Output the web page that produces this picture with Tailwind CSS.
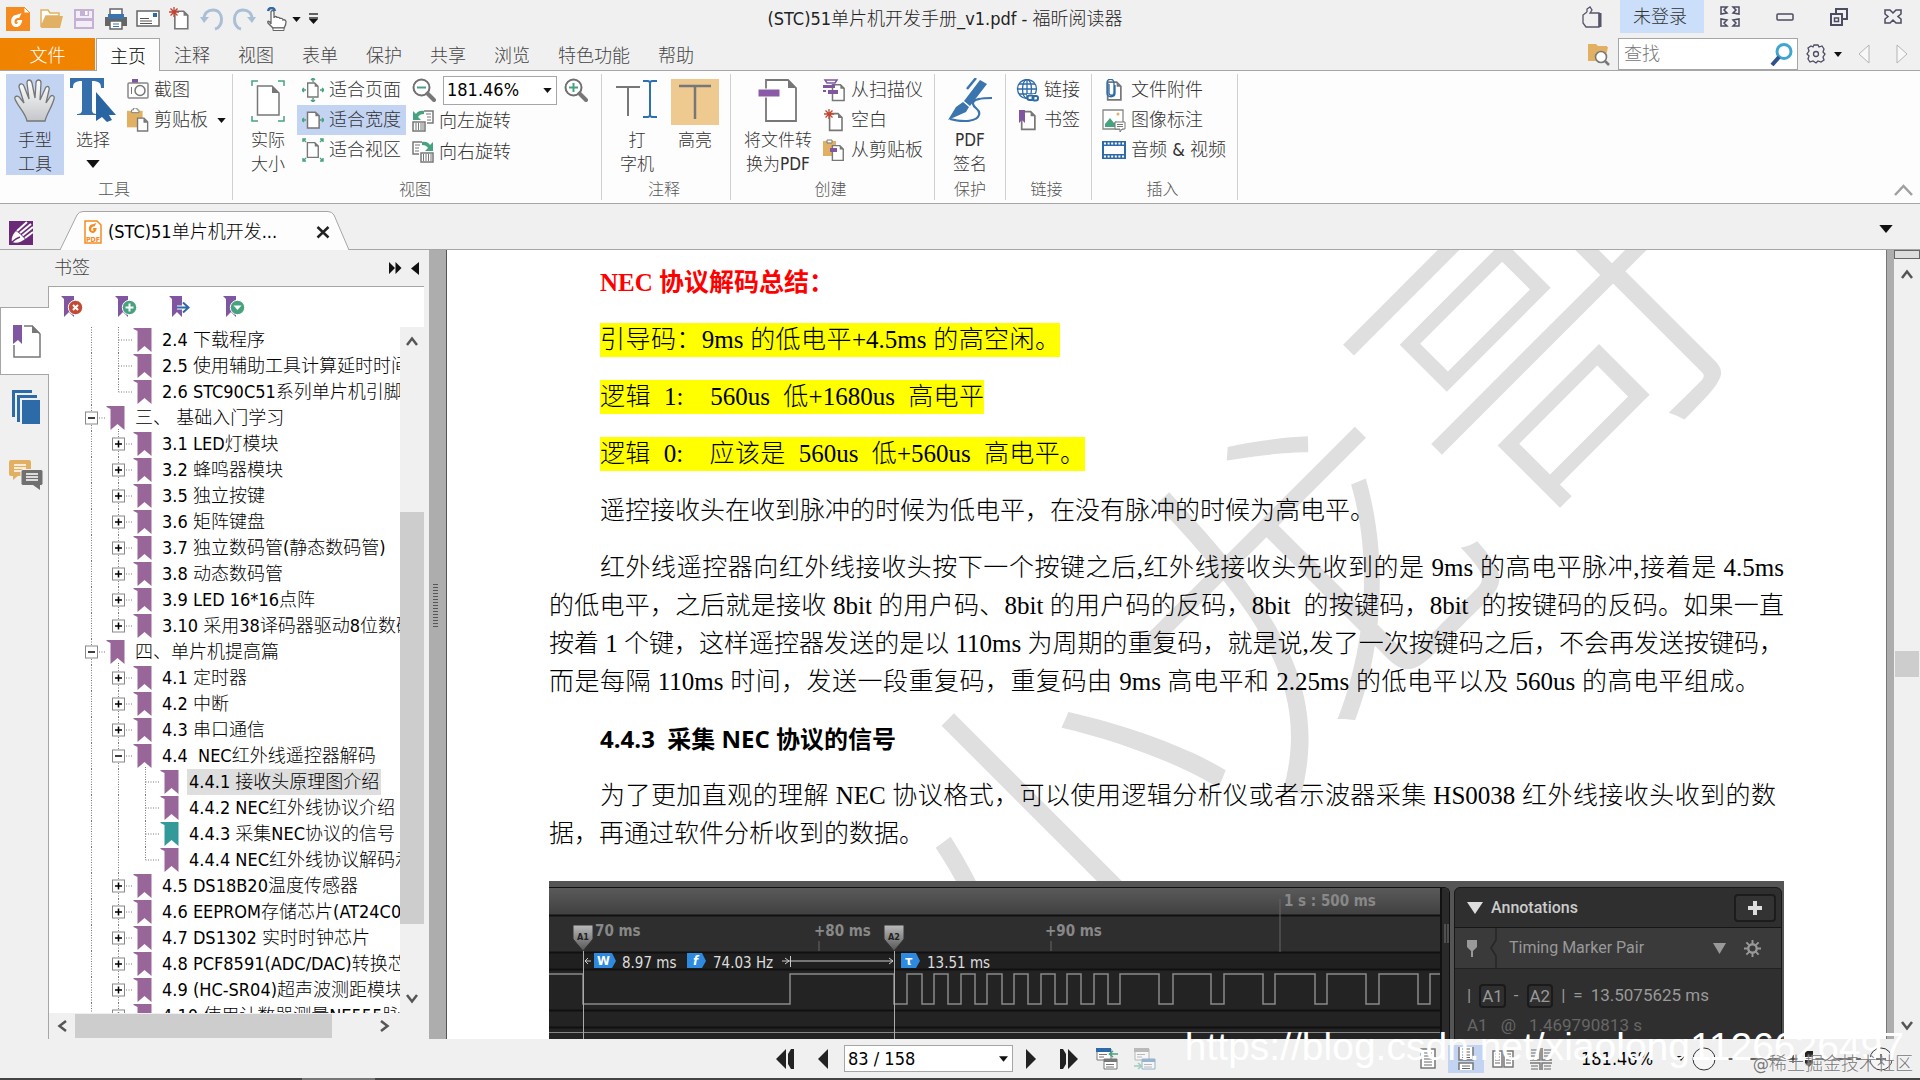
<!DOCTYPE html>
<html lang="zh-CN">
<head>
<meta charset="utf-8">
<title>(STC)51单片机开发手册_v1.pdf - 福昕阅读器</title>
<script src="https://cdn.jsdelivr.net/npm/@tailwindcss/browser@4"></script>
</head>
<body class="relative flex h-screen flex-col overflow-hidden bg-[#f0f0f0] font-['DejaVu_Sans_Condensed','Noto_Sans_CJK_SC',sans-serif] text-[18px] font-light leading-6 text-[#222]">

<svg class="hidden" aria-hidden="true">
  <symbol id="page" viewBox="0 0 20 24"><path d="M2 1.5h10.500l5 5v16H2z" fill="#fff" stroke="#777" stroke-width="2"/><path d="M12.500 1v6H18z" fill="#777"/></symbol>
  <symbol id="down" viewBox="0 0 10 6"><path d="M0 0h10L5 6z" fill="#111"/></symbol>
  <symbol id="ribbon" viewBox="0 0 22 22"><path d="M0 0h13v21l-5-5-5 5V3z" fill="#8056a0"/></symbol>
  <symbol id="clip" viewBox="0 0 24 26"><path d="M0 3h17v18H0z" fill="#e2b062"/><path d="M5 5V2h2V0h4v2h2v3z" fill="#fff" stroke="#777"/><path d="M11.500 11h7l4 4v10h-11z" fill="#fff" stroke="#777" stroke-width="1.500"/><path d="M18 11v5h5z" fill="#777"/></symbol>
  <symbol id="star" viewBox="0 0 10 10"><path d="M5 0v10M0 5h10M1.500 1.500l7 7M8.500 1.500l-7 7" stroke="#c2452f" stroke-width="1.300"/></symbol>
  <symbol id="mag" viewBox="0 0 24 24"><circle cx="9.500" cy="9.500" r="8" fill="#fff" stroke="#6f6f6f" stroke-width="2"/><path d="M15.500 15.500l6.500 6.500" stroke="#777" stroke-width="4" stroke-linecap="round"/></symbol>
  <symbol id="g" viewBox="0 0 12 12"><path d="M10 0L6 1.500C3 1.500 1 4 1 7s2 5 4.500 5S10 10 10.500 6H6.500l-1 2H7c-.500 1-1 1.500-1.700 1.500C4 9.500 3.600 8 4 6.500S6 4 8 4z"/></symbol>
</svg>

<header>
  <div class="flex h-[38px] items-start">
    <div class="flex w-[330px] shrink-0 items-center gap-2 pt-[7px] pl-[6px]">
      <svg class="mr-0.5 size-6" viewBox="0 0 24 24"><path d="M0 0h18l6 6v18H0z" fill="#f58a1f"/><path d="M18 0v6h6z" fill="#fff" stroke="#f58a1f"/><use href="#g" x="4" y="6" width="14" height="14" fill="#fff"/></svg>
      <button aria-label="打开"><svg class="size-6" viewBox="0 0 24 24"><path d="M1 3h7l2 3h9v3H6L1 20z" fill="#fff" stroke="#e2b062" stroke-width="1.500"/><path d="M6 9h17l-3 12H1z" fill="#e2b062"/></svg></button>
      <button aria-label="保存"><svg class="size-6" viewBox="0 0 24 24"><path d="M3 3h18v18H3z" fill="#f3edf6" stroke="#c5b1d3" stroke-width="2"/><path d="M3 11h18v3H3zM8 3h9v6H8z" fill="#c5b1d3"/><path d="M13 4h2.500v4H13z" fill="#fff"/></svg></button>
      <button aria-label="打印"><svg class="size-6" viewBox="0 0 24 24"><path d="M1 10h22v9H1z" fill="#666"/><path d="M6 2h12v7H6z" fill="#fff" stroke="#666" stroke-width="1.500"/><path d="M4 7h16v5H4z" fill="#3a75ad"/><path d="M6 14h12v8H6z" fill="#fff" stroke="#666" stroke-width="1.500"/><path d="M9 17h6M9 19.500h6" stroke="#3a75ad"/></svg></button>
      <button aria-label="邮件"><svg class="size-6" viewBox="0 0 24 24"><path d="M1 4h22v15H1z" fill="#fff" stroke="#666" stroke-width="1.500"/><path d="M17 6h4v4h-4z" fill="#2d6aa8"/><path d="M4 11.500h9M4 14h12M4 16.500h12" stroke="#555"/></svg></button>
      <button aria-label="新建"><svg class="size-6" viewBox="0 0 24 24"><use href="#page" x="5" y="3" width="17" height="20"/><use href="#star" x="1" y="0" width="10" height="10"/></svg></button>
      <button aria-label="撤销"><svg class="size-6" viewBox="0 0 24 24"><path d="M4 12c0-6 4-9 9-9 11 0 11 17 2 19" fill="none" stroke="#a9bfd6" stroke-width="3"/><path d="M0 10h9l-5 6z" fill="#a9bfd6"/></svg></button>
      <button aria-label="重做"><svg class="size-6" viewBox="0 0 24 24"><path d="M20 12c0-6-4-9-9-9C0 3 0 20 9 22" fill="none" stroke="#a9bfd6" stroke-width="3"/><path d="M24 10h-9l5 6z" fill="#a9bfd6"/></svg></button>
      <button aria-label="触摸模式" class="flex items-center gap-1"><svg class="size-6" viewBox="0 0 24 24"><path d="M4 4c1-4 6-4 7 0" fill="none" stroke="#2d6aa8" stroke-width="2.500"/><path d="M7 17V5c0-2 3-2 3 0v6c0-2 3-2 3 0 0-1 3-1 3 1 0-1 3-1 3 1 2-1 3 1 3 2 0 3-1 4-2 6H9l-5-5c-1-2 1-3 3 1z" fill="#fff" stroke="#666" stroke-width="1.300"/><path d="M9 21h11v2.500H9z" fill="#fff" stroke="#666"/></svg><svg class="h-[5px] w-[9px]"><use href="#down"/></svg></button>
      <button aria-label="自定义"><svg class="h-3 w-[9px]" viewBox="0 0 9 12"><path d="M0 1h9M0 5h9" stroke="#333" stroke-width="1.500"/><path d="M0 6h9l-4.500 5z" fill="#111"/></svg></button>
    </div>
    <h1 class="min-w-0 flex-1 pt-[7px] text-center">(STC)51单片机开发手册_v1.pdf - 福昕阅读器</h1>
    <div class="flex w-[360px] shrink-0 items-center text-[#4b4b62]">
      <button aria-label="换肤" class="ml-[22px] mr-4"><svg class="size-[22px]" viewBox="0 0 22 22" fill="none" stroke="#55556a" stroke-width="1.300"><path d="M5 6L5 3l3-2 2 3-2 3h9v14H4l-3-4V9l4-3"/><path d="M18 7v14" stroke-width="3"/></svg></button>
      <button class="h-[33px] w-[84px] bg-[#cbdffa] pr-1 text-[#333]">未登录</button>
      <div class="flex flex-1 items-center justify-between pl-4 pr-[18px]">
        <button aria-label="界面"><svg class="h-[21px] w-5" viewBox="0 0 20 21" fill="none" stroke="#4b4b62" stroke-width="1.500"><path d="M1 8V1h6L4 4l3 3zM19 8V1h-6l3 3-3 3zM1 13v7h6l-3-3 3-3zM19 13v7h-6l3-3-3-3z"/></svg></button>
        <button aria-label="最小化"><svg class="h-2 w-[18px]" viewBox="0 0 18 8"><rect x="1" y="1" width="16" height="6" rx="1" fill="none" stroke="#4b4b62" stroke-width="1.500"/></svg></button>
        <button aria-label="还原"><svg class="size-[18px]" viewBox="0 0 18 18" fill="none" stroke="#4b4b62" stroke-width="2"><path d="M6 5V1h11v10h-4M1 6h11v11H1z"/><path d="M4.500 10h4v3.500h-4z" stroke-width="1.500"/></svg></button>
        <button aria-label="关闭"><svg class="h-[15px] w-[18px]" viewBox="0 0 18 15"><path d="M1 1h5l3 3 3-3h5v4l-3 2.500L17 10v4h-5l-3-3-3 3H1v-4l3-2.500L1 5z" fill="none" stroke="#4b4b62" stroke-width="1.500"/></svg></button>
      </div>
    </div>
  </div>

  <div class="flex h-[33px] items-stretch border-b border-[#a6a6a6] text-[#444]">
    <nav class="flex items-stretch">
      <button class="w-[95px] bg-[#f08300] pt-1 text-white">文件</button>
      <button class="relative -mb-px ml-px border border-b-0 border-[#a6a6a6] bg-[#fdfdfd] px-[13px] pt-[3px] text-black">主页</button>
      <button class="px-[14px] pt-1">注释</button>
      <button class="px-[14px] pt-1">视图</button>
      <button class="px-[14px] pt-1">表单</button>
      <button class="px-[14px] pt-1">保护</button>
      <button class="px-[14px] pt-1">共享</button>
      <button class="px-[14px] pt-1">浏览</button>
      <button class="px-[14px] pt-1">特色功能</button>
      <button class="px-[14px] pt-1">帮助</button>
    </nav>
    <div class="flex flex-1 items-center justify-end pr-3">
      <button aria-label="高级查找" class="mr-2"><svg class="size-[23px]" viewBox="0 0 23 23"><path d="M1 1h8l2 2h9v3H1z" fill="#e2b062"/><path d="M1 4h20l-3 14H1z" fill="#e2b062"/><circle cx="14" cy="14" r="5.500" fill="#fff" stroke="#777" stroke-width="1.600"/><path d="M18 18l4 4" stroke="#777" stroke-width="2.500"/></svg></button>
      <div class="flex h-8 w-[180px] items-center border border-[#a6a6a6] bg-white pr-1">
        <input aria-label="查找" placeholder="查找" class="w-full min-w-0 px-[5px] outline-none placeholder:text-[#777]">
        <svg class="size-[23px] shrink-0" viewBox="0 0 23 23"><circle cx="14" cy="8.500" r="7" fill="none" stroke="#3fa6d0" stroke-width="3"/><path d="M9 14l-7 8" stroke="#32518f" stroke-width="4"/></svg>
      </div>
      <button aria-label="设置" class="ml-2 flex items-center gap-2"><svg class="size-5" viewBox="0 0 20 20" fill="none" stroke="#4b4b62" stroke-width="1.300"><path d="M8 1h4l1 2 3-1 2 3-1 3 2 2-2 3 1 3-3 2-3-1-2 2-3-2-3 1-2-3 1-3-2-2 2-3-1-3 3-2 2 1z"/><circle cx="10" cy="10" r="2.500"/></svg><svg class="h-[5px] w-2"><use href="#down"/></svg></button>
      <button aria-label="上一个" class="ml-4"><svg class="h-5 w-3" viewBox="0 0 12 20"><path d="M11 1v18L1 10z" fill="#f8f8f8" stroke="#b4b4b4"/></svg></button>
      <button aria-label="下一个" class="ml-[26px]"><svg class="h-5 w-3" viewBox="0 0 12 20"><path d="M1 1v18l10-9z" fill="#f8f8f8" stroke="#b4b4b4"/></svg></button>
    </div>
  </div>

  <div class="flex h-[133px] border-b border-[#a6a6a6] bg-[#fdfdfd] py-[3px] text-[#333]">
    <section class="flex w-[233px] flex-col border-r border-[#d0d0d0]">
      <div class="flex flex-1">
        <button class="ml-[6px] flex h-[101px] w-[58px] flex-col items-center bg-[#c3d4f3] pt-[5px] text-[17px]">
          <svg class="mb-1.5 h-[43px] w-[42px] shrink-0" viewBox="0 0 42 43"><defs><linearGradient id="h" x2="0" y2="1"><stop stop-color="#fff"/><stop offset="1" stop-color="#c4c6c9"/></linearGradient></defs><path d="M13 42C11 33 4 28 1 20c-1-3 3-4 5-1l4 5L5 8c0-4 4-4 5-1l5 13L13 4c0-4 4-4 5 0l3 15 1-15c0-4 5-4 5 0l-1 17 5-11c1-4 5-3 4 1l-3 13 4-6c2-3 5-1 4 2-2 8-7 14-9 22z" fill="url(#h)" stroke="#777" stroke-width="1.300"/></svg>
          <span>手型</span><span>工具</span>
        </button>
        <button class="ml-[6px] flex w-[46px] flex-col items-center pt-1 text-[17px]">
          <svg class="mb-1.5 h-[44px] w-[46px] shrink-0" viewBox="0 0 46 44"><path d="M0 0h34v10h-3c0-5-2-7-9-7v29c0 3 2 4 5 4v1H7v-1c3 0 5-1 5-4V3C5 3 3 5 3 10H0z" fill="#3670ac"/><path d="M26 14v29l6-4 5 5 5-2-3-5h7z" fill="#2a65a3"/></svg>
          <span>选择</span><svg class="mt-2 h-2 w-[14px] shrink-0"><use href="#down"/></svg>
        </button>
        <div class="ml-[11px] flex flex-col items-start gap-[6px] pt-1">
          <button class="flex items-center gap-[5px] text-[18px]"><svg class="h-[22px] w-[22px]" viewBox="0 0 22 22"><path d="M5 0h6v4H5z" fill="#8056a0"/><rect x="1" y="4" width="20" height="15" rx="1" fill="#fff" stroke="#888" stroke-width="1.500"/><circle cx="13" cy="11.500" r="5" fill="none" stroke="#777" stroke-width="1.500"/><path d="M4.500 8v7" stroke="#777"/></svg>截图</button>
          <button class="flex items-center gap-[5px] text-[18px]"><svg class="h-[24px] w-[22px]"><use href="#clip"/></svg>剪贴板<svg class="ml-1 h-[5px] w-[9px]"><use href="#down"/></svg></button>
        </div>
      </div>
      <h2 class="pr-1 text-center text-base leading-5 text-[#555]">工具</h2>
    </section>

    <section class="flex w-[369px] flex-col border-r border-[#d0d0d0]">
      <div class="flex flex-1">
        <button class="ml-[17px] flex w-9 flex-col items-center pt-[6px] text-[17px]">
          <svg class="mb-[6px] h-[42px] w-[34px] shrink-0" viewBox="0 0 34 42"><path d="M1 6V1h6M27 1h6v5M1 36v5h6M27 41h6v-5" fill="none" stroke="#47a37f" stroke-width="1.500"/><path d="M6.500 6H21l7 7v22H6.500z" fill="#fff" stroke="#777" stroke-width="1.500"/><path d="M21 6v7h7z" fill="#777"/></svg>
          <span>实际</span><span>大小</span>
        </button>
        <div class="ml-[11px] flex flex-col pt-px">
          <button class="flex h-[30px] items-center gap-[5px] px-[5px]"><svg class="h-6 w-[22px]" viewBox="0 0 22 24"><use href="#page" x="4" y="4" width="14" height="16"/><path d="M11 0v4M9 2l2-2 2 2M11 20v4M9 22l2 2 2-2M0 12h4M2 10l-2 2 2 2M22 12h-4M20 10l2 2-2 2" fill="none" stroke="#47a37f" stroke-width="1.400"/></svg>适合页面</button>
          <button class="flex h-[30px] items-center gap-[5px] bg-[#c3d4f3] px-[5px]"><svg class="h-6 w-[22px]" viewBox="0 0 22 24"><use href="#page" x="4" y="3" width="15" height="18"/><path d="M0 12h4M2 10l-2 2 2 2M22 12h-4M20 10l2 2-2 2" fill="none" stroke="#47a37f" stroke-width="1.400"/></svg>适合宽度</button>
          <button class="flex h-[30px] items-center gap-[5px] px-[5px]"><svg class="h-6 w-[22px]" viewBox="0 0 22 24"><use href="#page" x="4" y="3" width="14" height="18"/><path d="M1 4V1h3M1 1l3 3M18 1h3v3M21 1l-3 3M1 20v3h3M1 23l3-3M18 23h3v-3M21 23l-3-3" fill="none" stroke="#47a37f" stroke-width="1.400"/></svg>适合视区</button>
        </div>
        <div class="ml-[6px] flex flex-col pt-px">
          <div class="flex h-[30px] items-center gap-[7px]">
            <button aria-label="缩小"><svg class="size-6" viewBox="0 0 24 24"><use href="#mag" width="24" height="24"/><path d="M5 9.500h9" stroke="#47a37f" stroke-width="2"/></svg></button>
            <div class="flex h-[29px] w-[114px] items-center border border-[#a6a6a6] bg-white text-black">
              <input aria-label="缩放比例" value="181.46%" class="w-full min-w-0 px-[3px] font-normal outline-none">
              <svg class="mr-1 h-[5px] w-[9px] shrink-0"><use href="#down"/></svg>
            </div>
            <button aria-label="放大"><svg class="size-6" viewBox="0 0 24 24"><use href="#mag" width="24" height="24"/><path d="M5 9.500h9M9.500 5v9" stroke="#47a37f" stroke-width="2"/></svg></button>
          </div>
          <button class="flex h-8 items-center gap-[5px]"><svg class="size-[22px]" viewBox="0 0 22 22"><path d="M12 1h9v12h-6" fill="#fff" stroke="#777" stroke-width="1.500"/><path d="M14 4h5M15 7h4M15 10h4" stroke="#777"/><path d="M1 1v9h8L6 7c1-2 3-3 6-3V1C8 0 5 2 4 4z" fill="#47a37f"/><path d="M1 12h12v9H1z" fill="#fff" stroke="#777" stroke-width="1.500"/><path d="M4 13v7M6.500 13v7M9 13v7M11 13v7" stroke="#777"/></svg>向左旋转</button>
          <button class="flex h-[30px] items-center gap-[5px]"><svg class="size-[22px]" viewBox="0 0 22 22"><path d="M10 1H1v12h6" fill="#fff" stroke="#777" stroke-width="1.500"/><path d="M3 4h5M3 7h4M3 10h4" stroke="#777"/><path d="M21 1v9h-8l3-3c-1-2-3-3-6-3V1c4-1 7 1 8 3z" fill="#47a37f"/><path d="M9 12h12v9H9z" fill="#fff" stroke="#777" stroke-width="1.500"/><path d="M11.500 13v7M14 13v7M16.500 13v7M19 13v7" stroke="#777"/></svg>向右旋转</button>
        </div>
      </div>
      <h2 class="pr-1 text-center text-base leading-5 text-[#555]">视图</h2>
    </section>

    <section class="flex w-[129px] flex-col border-r border-[#d0d0d0]">
      <div class="flex flex-1">
        <button class="ml-[14px] flex w-[42px] flex-col items-center pt-[6px] text-[17px]">
          <svg class="mb-[10px] h-[38px] w-[42px] shrink-0" viewBox="0 0 42 38"><path d="M0 7h24M12 7v29" stroke="#777" stroke-width="2"/><path d="M27 1h5l2 1 2-1h5M27 37h5l2-1 2 1h5M34 2v34" fill="none" stroke="#2d6fb0" stroke-width="2"/></svg>
          <span>打</span><span>字机</span>
        </button>
        <button class="ml-[13px] flex w-12 flex-col items-center pt-[5px] text-[17px]">
          <svg class="mb-[3px] h-[46px] w-12 shrink-0 bg-[#eeca91]" viewBox="0 0 48 46"><path d="M8 7h32M24 7v33" stroke="#777" stroke-width="2.500"/></svg>
          <span>高亮</span>
        </button>
      </div>
      <h2 class="pr-1 text-center text-base leading-5 text-[#555]">注释</h2>
    </section>

    <section class="flex w-[204px] flex-col border-r border-[#d0d0d0]">
      <div class="flex flex-1">
        <button class="ml-[10px] flex w-[74px] flex-col items-center pt-[5px] text-[17px]">
          <svg class="mb-[6px] h-[43px] w-10 shrink-0" viewBox="0 0 40 43"><path d="M8 1h22l8 8v33H8z" fill="#fff" stroke="#777" stroke-width="1.800"/><path d="M30 1v8h8z" fill="#777"/><path d="M0 10h22v8H0z" fill="#8b5aa6" stroke="#fff"/></svg>
          <span>将文件转</span><span>换为<b class="font-normal">PDF</b></span>
        </button>
        <div class="ml-2 flex flex-col pt-px">
          <button class="flex h-[30px] items-center gap-[5px]"><svg class="size-[23px]" viewBox="0 0 23 23"><use href="#page" x="8" y="4" width="15" height="19"/><path d="M2 1h12l-2 3H4z" fill="#fff" stroke="#8056a0" stroke-width="1.500"/><path d="M0 6h12v3H0zM5 11h10v4H5zM0 11h3v2H0z" fill="#8056a0"/></svg>从扫描仪</button>
          <button class="flex h-[30px] items-center gap-[5px]"><svg class="size-[23px]" viewBox="0 0 23 23"><use href="#page" x="5" y="3" width="16" height="20"/><use href="#star" x="1" y="0" width="10" height="10"/></svg>空白</button>
          <button class="flex h-[30px] items-center gap-[5px]"><svg class="size-[23px]" viewBox="0 0 23 23"><path d="M0 2h13v15H0z" fill="#e2b062"/><path d="M4 4V1h5v3z" fill="#fff" stroke="#777"/><use href="#page" x="8" y="5" width="14" height="18"/><path d="M7 9h7v4H7z" fill="#8056a0"/></svg>从剪贴板</button>
        </div>
      </div>
      <h2 class="pr-1 text-center text-base leading-5 text-[#555]">创建</h2>
    </section>

    <section class="flex w-[71px] flex-col border-r border-[#d0d0d0]">
      <button class="flex flex-1 flex-col items-center pt-1 text-[17px]">
        <svg class="mb-[6px] h-[44px] w-[46px] shrink-0" viewBox="0 0 46 44"><path d="M33 2l7 4-17 22-6-5zM16 24l6 5-3 5L1 42l8-13z" fill="#3a75ad"/><path d="M20 11l9-11" stroke="#3a75ad" stroke-width="2.500"/><path d="M45 20c-10 0-20 1-19 6s8 5 6 11-14 8-29 4" fill="none" stroke="#3a75ad" stroke-width="2.200"/></svg>
        <span class="font-normal">PDF</span><span>签名</span>
      </button>
      <h2 class="text-center text-base leading-5 text-[#555]">保护</h2>
    </section>

    <section class="flex w-[86px] flex-col border-r border-[#d0d0d0]">
      <div class="ml-[10px] flex flex-1 flex-col pt-px">
        <button class="flex h-[30px] items-center gap-[5px]"><svg class="size-[23px]" viewBox="0 0 23 23" fill="none" stroke="#2d6aa8" stroke-width="1.300"><circle cx="11" cy="10" r="9.500"/><ellipse cx="11" cy="10" rx="4.500" ry="9.500"/><path d="M11 0v20M1.500 10h19M3 5h16M3 15h16"/><path d="M11 15h12v8H11z" fill="#fff" stroke="none"/><rect x="11.500" y="16.500" width="6" height="4.500" rx="2" stroke-width="2"/><rect x="16.500" y="17" width="5.500" height="4.500" rx="2" stroke-width="2"/></svg>链接</button>
        <button class="flex h-[30px] items-center gap-[5px]"><svg class="size-[23px]" viewBox="0 0 23 23"><use href="#page" x="4" y="1" width="17" height="21"/><path d="M3 1h6v13l-3-3-3 3z" fill="#8056a0"/></svg>书签</button>
      </div>
      <h2 class="pr-1 text-center text-base leading-5 text-[#555]">链接</h2>
    </section>

    <section class="flex w-[146px] flex-col border-r border-[#d0d0d0]">
      <div class="ml-[10px] flex flex-1 flex-col pt-px">
        <button class="flex h-[30px] items-center gap-[5px]"><svg class="h-[23px] w-6" viewBox="0 0 24 23"><use href="#page" x="4" y="1" width="17" height="22"/><path d="M7 5v9c0 3 5 3 5 0V4c0-5-7-5-7 0v10c0 5 8 5 8 0V6" fill="none" stroke="#2d6aa8" stroke-width="1.300"/></svg>文件附件</button>
        <button class="flex h-[30px] items-center gap-[5px]"><svg class="h-[23px] w-6" viewBox="0 0 24 23"><path d="M1 1h20v19H1z" fill="#fff" stroke="#888" stroke-width="1.300"/><path d="M3 18V15l5-6 4 5 2-2 4 6z" fill="#47a37f"/><circle cx="16" cy="5" r="1.500" fill="#e2b062"/><path d="M13 13h10v7h-3l-2 3v-3h-5z" fill="#fff" stroke="#777"/><path d="M15 15.500h6M15 17.500h6" stroke="#777"/></svg>图像标注</button>
        <button class="flex h-[30px] items-center gap-[5px]"><svg class="h-[18px] w-6 shrink-0" viewBox="0 0 24 18"><path d="M0 0h24v18H0z" fill="#2d6aa8"/><path d="M2 5h20v8H2z" fill="#fff"/><path d="M2 2.500h20M2 15.500h20" stroke="#fff" stroke-width="2" stroke-dasharray="2 1.600"/></svg><span class="whitespace-nowrap">音频 &amp; 视频</span></button>
      </div>
      <h2 class="pr-1 text-center text-base leading-5 text-[#555]">插入</h2>
    </section>
    <div class="flex flex-1 items-end justify-end pr-[7px] pb-1"><button aria-label="折叠功能区"><svg class="h-3 w-[19px]" viewBox="0 0 19 12"><path d="M1 11l8.500-9 8.500 9" fill="none" stroke="#a0a0a0" stroke-width="2.500"/></svg></button></div>
  </div>

  <div class="flex h-[46px] items-end border-b border-[#a6a6a6]">
    <svg class="mb-1 ml-[9px] size-6" viewBox="0 0 24 24"><path d="M0 0h24v24H0z" fill="#6b2a78"/><path d="M3 21c-1-4 1-8 4-11l4 3 5 5c-4 3-8 5-13 3z" fill="#fff"/><path d="M8 10L18 1M11 12L22 3M13.500 14.500L24 6M16 17l8-6" stroke="#fff" stroke-width="2"/><path d="M3 21c3-3 5-4 8-5" fill="none" stroke="#6b2a78" stroke-width="1.500"/></svg>
    <div class="relative -mb-px ml-[27px] flex h-[39px] w-[290px] items-center">
      <svg class="absolute inset-0 h-full w-full" viewBox="0 0 290 39" preserveAspectRatio="none"><path d="M0 39L17 4q2-3.500 6-3.500h245q4 0 6 3.500l15 35" fill="#fdfdfd" stroke="#a6a6a6"/></svg>
      <svg class="relative mt-[3px] ml-6 h-6 w-[18px]" viewBox="0 0 18 24"><path d="M1 1h12l4 4v18H1z" fill="#fff" stroke="#f58a1f" stroke-width="1.500"/><use href="#g" x="4" y="3" width="10" height="10" fill="#f58a1f"/><text x="2" y="21.500" font-size="7" font-weight="700" fill="#f58a1f">PDF</text></svg>
      <a href="#" class="relative mt-[3px] ml-[6px] whitespace-nowrap text-black">(STC)51单片机开发...</a>
      <button aria-label="关闭标签" class="absolute top-[14px] right-5"><svg class="size-[14px]" viewBox="0 0 14 14"><path d="M1.500 2l11 10.500M12.500 2l-11 10.500" stroke="#222" stroke-width="2.500"/></svg></button>
    </div>
    <button aria-label="标签列表" class="mr-[27px] mb-4 ml-auto"><svg class="h-2 w-[14px]"><use href="#down"/></svg></button>
  </div>
</header>

<main class="flex min-h-0 flex-1">
  <aside class="flex w-[429px] shrink-0">
    <div class="flex w-12 shrink-0 flex-col">
      <button aria-label="书签面板" class="relative z-10 mt-[57px] -mr-px flex h-[68px] items-center justify-center border border-r-0 border-[#a6a6a6] bg-white pl-1"><svg class="h-[33px] w-7" viewBox="0 0 28 33"><path d="M1 20V32h26V9l-8-8H11" fill="#fff" stroke="#777" stroke-width="1.500"/><path d="M19 0v8h8z" fill="#777"/><path d="M0 0h9v19l-4-4-5 4z" fill="#8056a0"/></svg></button>
      <button aria-label="页面面板" class="mt-[15px] flex justify-center pl-1"><svg class="h-[35px] w-7" viewBox="0 0 28 35" fill="#2d6aa8"><path d="M0 0h20v3H3v24H0zM5 5h20v3H8v24H5zM10 10h18v24H10z"/></svg></button>
      <button aria-label="注释面板" class="mt-[35px] ml-1 flex justify-center"><svg class="h-[30px] w-[34px]" viewBox="0 0 34 30"><rect width="22" height="16" rx="2" fill="#e2b062"/><path d="M4 15v5l6-5z" fill="#e2b062"/><path d="M5 5h12M5 8h12M5 11h8" stroke="#fff" stroke-width="1.300"/><rect x="12" y="9.500" width="22" height="16" rx="2" fill="#707070" stroke="#f0f0f0"/><path d="M24 25h7v5z" fill="#707070"/><path d="M17 14h12M17 17h12M17 20h12" stroke="#fff" stroke-width="1.300"/></svg></button>
    </div>
    <div class="flex w-[376px] flex-col">
      <div class="flex h-9 shrink-0 items-center pl-[6px] pr-[5px]">
        <h2 class="flex-1 text-[#444]">书签</h2>
        <svg class="mr-[9px] h-3 w-[13px]" viewBox="0 0 13 12"><path d="M0 0l6 6-6 6zM6.500 0l6 6-6 6z" fill="#111"/></svg>
        <svg class="h-[13px] w-2" viewBox="0 0 8 13"><path d="M8 0v13L0 6.500z" fill="#111"/></svg>
      </div>
      <div class="flex min-h-0 flex-1 flex-col border-l border-t border-[#a6a6a6] bg-white">
        <div class="flex h-10 shrink-0 items-center gap-8 pl-3">
          <button aria-label="删除书签"><svg class="size-[22px]" viewBox="0 0 22 22"><use href="#ribbon" width="22" height="22"/><circle cx="14.500" cy="11.500" r="7.200" fill="#c24b34" stroke="#fff"/><path d="M12 9l5 5M17 9l-5 5" stroke="#fff" stroke-width="2"/></svg></button>
          <button aria-label="添加书签"><svg class="size-[22px]" viewBox="0 0 22 22"><use href="#ribbon" width="22" height="22"/><circle cx="14.500" cy="11.500" r="7.200" fill="#47a37f" stroke="#fff"/><path d="M10.500 11.500h8M14.500 7.500v8" stroke="#fff" stroke-width="2"/></svg></button>
          <button aria-label="转到书签"><svg class="size-[22px]" viewBox="0 0 22 22"><use href="#ribbon" width="22" height="22"/><path d="M8 11.500h11M14 6.500l5.500 5-5.500 5" fill="none" stroke="#fff" stroke-width="4"/><path d="M8 11.500h11M14 6.500l5.500 5-5.500 5" fill="none" stroke="#2d6aa8" stroke-width="2"/></svg></button>
          <button aria-label="书签选项"><svg class="size-[22px]" viewBox="0 0 22 22"><use href="#ribbon" width="22" height="22"/><circle cx="14.500" cy="11.500" r="7.200" fill="#47a37f" stroke="#fff"/><path d="M10.500 9.500h8l-4 4.500z" fill="#fff"/></svg></button>
        </div>
        <div class="flex min-h-0 flex-1">
          <ul id="tree" class="min-w-0 flex-1 overflow-hidden text-black"></ul>
          <div class="flex w-6 shrink-0 flex-col items-center bg-[#f0f0f0] py-[9px]">
            <svg class="h-[10px] w-3" viewBox="0 0 12 10"><path d="M1 9l5-6.500L11 9" fill="none" stroke="#555" stroke-width="2.500"/></svg>
            <div class="mt-[166px] h-[412px] w-full bg-[#cdcdcd]"></div>
            <svg class="mt-auto h-[10px] w-3" viewBox="0 0 12 10"><path d="M1 1l5 6.500L11 1" fill="none" stroke="#555" stroke-width="2.500"/></svg>
          </div>
        </div>
        <div class="flex h-[26px] shrink-0 items-center bg-[#f0f0f0] pl-2 pr-[34px]">
          <svg class="h-3 w-[10px]" viewBox="0 0 10 12"><path d="M9 1L2.500 6 9 11" fill="none" stroke="#555" stroke-width="2.500"/></svg>
          <div class="ml-2 h-6 w-[257px] bg-[#cdcdcd]"></div>
          <svg class="ml-auto h-3 w-[10px]" viewBox="0 0 10 12"><path d="M1 1l6.500 5L1 11" fill="none" stroke="#555" stroke-width="2.500"/></svg>
        </div>
      </div>
    </div>
  </aside>
  <div class="flex w-[18px] shrink-0 items-center border-r border-[#555] bg-[#adadad] pb-[80px] pl-1">
    <div class="h-11 w-[5px] bg-[radial-gradient(#555_40%,transparent_45%)] bg-[length:2px_3px]"></div>
  </div>

  <article class="relative min-w-0 flex-1 overflow-hidden bg-white px-[102px] pt-[14px] font-['Liberation_Serif','Noto_Sans_CJK_SC',serif] text-[25px] leading-[38px] text-black">
    <div aria-hidden="true" class="absolute top-[345px] left-[862px] -translate-x-1/2 -translate-y-1/2 -rotate-45 text-[345px] leading-none whitespace-nowrap text-[#dfdfdf]">小龙哥</div>
    <div class="relative flex flex-col gap-[19px] whitespace-pre">
      <h3 class="pl-[51px] font-bold text-[#f00]">NEC 协议解码总结：</h3>
      <p class="pl-[51px]"><mark class="inline-block h-[34px] w-[460px] bg-[#ff0] leading-[34px] [text-align-last:justify]">引导码：9ms 的低电平+4.5ms 的高空闲。</mark></p>
      <p class="pl-[51px]"><mark class="inline-block h-[34px] w-[384px] bg-[#ff0] leading-[34px] [text-align-last:justify]">逻辑  1:    560us  低+1680us  高电平</mark></p>
      <p class="pl-[51px]"><mark class="inline-block h-[34px] w-[485px] bg-[#ff0] leading-[34px] [text-align-last:justify]">逻辑  0:    应该是  560us  低+560us  高电平。</mark></p>
      <p class="pl-[51px]">遥控接收头在收到脉冲的时候为低电平，在没有脉冲的时候为高电平。</p>
      <p class="whitespace-normal"><span class="block pl-[51px] whitespace-nowrap [text-align-last:justify]">红外线遥控器向红外线接收头按下一个按键之后,红外线接收头先收到的是 9ms 的高电平脉冲,接着是 4.5ms</span><span class="block whitespace-nowrap [text-align-last:justify]">的低电平，之后就是接收 8bit 的用户码、8bit 的用户码的反码，8bit&nbsp; 的按键码，8bit&nbsp; 的按键码的反码。如果一直</span><span class="block whitespace-nowrap [text-align-last:justify]">按着 1 个键，这样遥控器发送的是以 110ms 为周期的重复码，就是说,发了一次按键码之后，不会再发送按键码，</span><span class="block pr-6 whitespace-nowrap [text-align-last:justify]">而是每隔 110ms 时间，发送一段重复码，重复码由 9ms 高电平和 2.25ms 的低电平以及 560us 的高电平组成。</span></p>
      <h3 class="pl-[51px] font-['Open_Sans','Noto_Sans_CJK_SC',sans-serif] text-[24px] font-bold">4.4.3  采集 NEC 协议的信号</h3>
      <p class="whitespace-normal"><span class="block pl-[51px] pr-2 whitespace-nowrap [text-align-last:justify]">为了更加直观的理解 NEC 协议格式，可以使用逻辑分析仪或者示波器采集 HS0038 红外线接收头收到的数</span><span class="block">据，再通过软件分析收到的数据。</span></p>
    </div>

    <figure class="relative mt-7 flex h-[200px] gap-1 bg-[#555] pt-[6px] pr-[2px] font-['DejaVu_Sans_Condensed',sans-serif] leading-normal">
      <div class="flex min-w-0 flex-1 overflow-hidden rounded-tr-md border-t border-r border-[#111] bg-[#232323]">
        <svg class="h-[194px] w-full" viewBox="0 0 903 194" preserveAspectRatio="xMinYMin slice" font-size="15">
          <defs><linearGradient id="bar" x2="0" y2="1"><stop stop-color="#5a5a5a"/><stop offset="1" stop-color="#404040"/></linearGradient><linearGradient id="pin" x2="0" y2="1"><stop stop-color="#bbb"/><stop offset="1" stop-color="#555"/></linearGradient></defs>
          <path d="M0 0h903v27H0z" fill="url(#bar)"/><path d="M0 28h903v36H0z" fill="#2e2e2e"/><path d="M0 65h903v16H0z" fill="#202020"/>
          <path d="M0 27.500h903M0 64.500h903M0 81.500h903M0 122.500h903M0 139.500h903" stroke="#101010" stroke-width="2"/>
          <path d="M0 144.500h892" stroke="#888"/>
          <path d="M270 53v10M502 53v10M731 11v53" stroke="#666"/>
          <g fill="#888" font-weight="700"><text x="46" y="48">70 ms</text><text x="265" y="48">+80 ms</text><text x="496" y="48">+90 ms</text><text x="735" y="18">1 s : 500 ms</text></g>
          <path d="M0 86h34v30h207V86h104v30h13V86h15v30h12V86h14v30h13V86h14v30h12V86h15v30h12V86h14v30h13V86h14v30h12V86h14v30h13V86h14v30h12V86h39v30h14V86h38v30h13V86h39v30h12V86h40v30h12V86h39v30h13V86h39v30h12V86h12" fill="none" stroke="#8a8a8a" stroke-width="1.500"/>
          <path d="M34.500 60v134M345.500 60v134" stroke="#aaa"/>
          <path d="M24 37h20v14L34 63 24 51zM335 37h20v14l-10 12-10-12z" fill="url(#pin)" stroke="#333"/>
          <g fill="#222" font-size="9" font-weight="700"><text x="28" y="52">A1</text><text x="339" y="52">A2</text></g>
          <path d="M45 65h18l4 8-4 7H45zM138 65h15l4 8-4 7h-15zM352 65h15l4 8-4 7h-15z" fill="#2d8ade"/>
          <g fill="#fff" font-size="13" font-weight="700"><text x="48" y="77">W</text><text x="144" y="77" font-style="italic">f</text><text x="356" y="77">τ</text></g>
          <g fill="#ddd" font-size="15"><text x="73" y="80">8.97 ms</text><text x="164" y="80">74.03 Hz</text><text x="378" y="80">13.51 ms</text></g>
          <path d="M36 73h6M39 70l-3 3 3 3M233 73h8M236 70l4 3-4 3M241.500 68v11M242 73h102M340 70l4 3-4 3" fill="none" stroke="#ccc"/>
          <path d="M892 0h11v194h-11z" fill="#2a2a2a"/><path d="M892 0v194" stroke="#111" stroke-width="2"/><path d="M896 36v19M899 36v19" stroke="#777"/>
        </svg>
      </div>
      <div class="w-[328px] shrink-0 rounded-t-md border border-[#181818] bg-[#2f2f2f] font-['Roboto',sans-serif] text-base font-normal text-[#999]">
        <div class="flex h-10 items-center border-b border-[#161616] pl-3 pr-[5px] font-medium text-[#ccc]">
          <svg class="mr-2 h-3 w-4" viewBox="0 0 16 12"><path d="M0 0h16L8 12z" fill="#ddd"/></svg>Annotations
          <button aria-label="添加" class="ml-auto flex h-7 w-[42px] items-center justify-center rounded border-2 border-[#1c1c1c] bg-[#333]"><svg class="size-4" viewBox="0 0 16 16"><path d="M8 1v14M1 8h14" stroke="#ddd" stroke-width="4"/></svg></button>
        </div>
        <div class="flex h-[41px] items-center border-b border-[#222] bg-[#3a3a3a] pl-3 pr-5">
          <svg class="h-[17px] w-[10px]" viewBox="0 0 10 17"><path d="M0 0h10v7L6 11v6H4v-6L0 7z" fill="#999"/></svg>
          <svg class="mr-3 ml-3 h-10 w-2" viewBox="0 0 8 40"><path d="M7 0v12L2 20l5 8v12" fill="none" stroke="#262626" stroke-width="1.500"/></svg>
          Timing Marker Pair
          <svg class="ml-auto h-[11px] w-[13px]" viewBox="0 0 13 11"><path d="M0 0h13L6.500 11z" fill="#999"/></svg>
          <svg class="ml-[18px] size-[17px]" viewBox="0 0 18 18"><circle cx="9" cy="9" r="4.500" fill="none" stroke="#999" stroke-width="2.500"/><path d="M9 0v4M9 14v4M0 9h4M14 9h4M2.500 2.500l3 3M12.500 12.500l3 3M15.500 2.500l-3 3M5.500 12.500l-3 3" stroke="#999" stroke-width="2"/></svg>
        </div>
        <div class="flex items-center gap-2 pt-[14px] pl-3 text-[17px]"><span>|</span><span class="rounded border-2 border-[#1a1a1a] px-px leading-5">A1</span><span>-</span><span class="rounded border-2 border-[#1a1a1a] px-px leading-5">A2</span><span>|</span><span>=</span><span>13.5075625 ms</span></div>
        <div class="flex gap-[13px] pt-1 pl-3 text-[17px] text-[#666]"><span>A1</span><span>@</span><span>1.469790813 s</span></div>
      </div>
    </figure>
  </article>

  <div class="w-2 shrink-0 border-l border-[#777] bg-[#adadad]"></div>
  <div class="flex w-[26px] shrink-0 flex-col items-center pb-2">
    <div class="h-[9px] w-full border border-[#666] bg-[#ddd]"></div>
    <svg class="mt-[10px] h-[10px] w-3" viewBox="0 0 12 10"><path d="M1 9l5-6.500L11 9" fill="none" stroke="#555" stroke-width="2.500"/></svg>
    <div class="mt-[372px] h-[26px] w-6 bg-[#cdcdcd]"></div>
    <svg class="mt-auto h-[10px] w-3" viewBox="0 0 12 10"><path d="M1 1l5 6.500L11 1" fill="none" stroke="#555" stroke-width="2.500"/></svg>
  </div>
</main>

<footer class="relative flex h-[39px] shrink-0 items-center">
  <div class="flex flex-1 items-center pl-[776px] text-black">
    <button aria-label="第一页"><svg class="h-5 w-[18px]" viewBox="0 0 18 20"><path d="M10 0v20L0 10zM18 0h-3l-3 5v10l3 5h3z" fill="#222"/></svg></button>
    <button aria-label="上一页" class="ml-6"><svg class="h-5 w-[10px]" viewBox="0 0 10 20"><path d="M10 0v20L0 10z" fill="#222"/></svg></button>
    <div class="ml-4 flex h-[27px] w-[169px] items-center border border-[#a6a6a6] bg-white pr-1"><input aria-label="页码" value="83 / 158" class="w-full min-w-0 pl-[3px] font-normal outline-none"><svg class="h-[6px] w-[9px] shrink-0"><use href="#down"/></svg></div>
    <button aria-label="下一页" class="ml-[13px]"><svg class="h-5 w-[10px]" viewBox="0 0 10 20"><path d="M0 0v20l10-10z" fill="#222"/></svg></button>
    <button aria-label="最后一页" class="ml-6"><svg class="h-5 w-[18px]" viewBox="0 0 18 20"><path d="M8 0v20l10-10zM0 0h3l3 5v10l-3 5H0z" fill="#222"/></svg></button>
    <button aria-label="后退视图" class="ml-[18px]"><svg class="size-[22px]" viewBox="0 0 22 22"><path d="M1 1h14v11H1z" fill="#fff" stroke="#777"/><path d="M0 0h15v4H0z" fill="#2d6aa8"/><path d="M3 6.500h8M3 9h5" stroke="#777"/><path d="M22 6h-8M17 3l-3.500 3L17 9" fill="none" stroke="#47a37f" stroke-width="1.600"/><path d="M8 11h13v10H8z" fill="#fff" stroke="#777"/><path d="M8 11h13v3H8z" fill="#777"/><path d="M10 16.500h8M10 19h8" stroke="#777"/></svg></button>
    <button aria-label="前进视图" class="ml-4 opacity-45"><svg class="size-[22px]" viewBox="0 0 22 22"><path d="M1 1h14v11H1z" fill="#fff" stroke="#777"/><path d="M0 0h15v4H0z" fill="#777"/><path d="M3 6.500h8M3 9h5" stroke="#777"/><path d="M8 11h13v10H8z" fill="#fff" stroke="#2d6aa8"/><path d="M8 11h13v3H8z" fill="#2d6aa8"/><path d="M10 16.500h8M10 19h8" stroke="#777"/><path d="M0 18h7M4 15l3.500 3L4 21" fill="none" stroke="#47a37f" stroke-width="1.600"/></svg></button>
  </div>
  <div class="flex shrink-0 items-center pr-[27px] text-black">
    <button aria-label="单页"><svg class="h-[21px] w-4" viewBox="0 0 16 21"><path d="M1 1h14v19H1z" fill="#fff" stroke="#777" stroke-width="1.500"/><path d="M4 5h8M4 8h8M4 11h8M4 14h8M4 17h8" stroke="#666"/></svg></button>
    <button aria-label="连续" class="ml-3 flex h-7 w-9 items-center justify-center bg-[#c3d4f3]"><svg class="h-[23px] w-4" viewBox="0 0 16 23"><path d="M1 0v13h14V0M1 23v-7h14v7" fill="#fff" stroke="#777" stroke-width="1.500"/><path d="M4 2h8M4 5h8M4 8h8M4 10.500h8M4 19h8M4 21.500h8" stroke="#666"/></svg></button>
    <button aria-label="双页" class="ml-2"><svg class="h-[18px] w-[22px]" viewBox="0 0 22 18"><path d="M1 1h9v16H1zM12 1h9v16h-9z" fill="#fff" stroke="#777" stroke-width="1.500"/><path d="M3 4h5M3 7h5M3 10h5M3 13h5M14 4h5M14 7h5M14 10h5M14 13h5" stroke="#666"/></svg></button>
    <button aria-label="双页连续" class="ml-4"><svg class="h-[22px] w-[22px]" viewBox="0 0 22 22"><path d="M10 0v12H0M12 0v12h10M10 22v-7H0M12 22v-7h10" fill="none" stroke="#777" stroke-width="1.500"/><path d="M1 2h7M1 5h7M1 8h7M14 2h7M14 5h7M14 8h7M1 18h7M1 21h7M14 18h7M14 21h7" stroke="#666"/></svg></button>
    <span class="ml-[29px] w-[96px] font-normal">181.46%</span>
    <svg class="h-[5px] w-2"><use href="#down"/></svg>
    <button aria-label="缩小视图" class="ml-[7px]"><svg class="size-6" viewBox="0 0 24 24"><circle cx="12" cy="12" r="11" fill="#f6f6f6" stroke="#333"/><path d="M7 12h10" stroke="#333" stroke-width="1.500"/></svg></button>
    <svg class="mx-2 h-5 w-[137px]" viewBox="0 0 137 20"><path d="M0 10h137M69 6v8" stroke="#333" stroke-width="1.500"/><path d="M81 2h8v12l-4 4-4-4z" fill="#222"/></svg>
    <button aria-label="放大视图"><svg class="size-6" viewBox="0 0 24 24"><circle cx="12" cy="12" r="11" fill="#f6f6f6" stroke="#333"/><path d="M7 12h10M12 7v10" stroke="#333" stroke-width="1.500"/></svg></button>
  </div>
</footer>
<div class="flex h-[2px] shrink-0 bg-[#444] pl-[302px]"><div class="w-[73px] bg-[#777]"></div></div>

<div class="pointer-events-none absolute right-4 bottom-[10px] font-['Liberation_Sans',sans-serif] text-[39px] leading-[46px] whitespace-nowrap text-white">https://blog.csdn.net/xiaolong1126626497</div>
<div class="pointer-events-none absolute right-[7px] bottom-1 whitespace-nowrap text-[#777] [text-shadow:0_0_2px_#fff]">@稀土掘金技术社区</div>

<script>
  // Each row: level, toggle sign, title, guides (u = line above, d = line below, c = line towards children), state
  const rows = [
    [2, '', '2.4 下载程序', 'ud'], [2, '', '2.5 使用辅助工具计算延时时间', 'ud'], [2, '', '2.6 STC90C51系列单片机引脚', 'u'],
    [1, '-', '三、 基础入门学习', 'udc'],
    [2, '+', '3.1 LED灯模块', 'ud'], [2, '+', '3.2 蜂鸣器模块', 'ud'], [2, '+', '3.5 独立按键', 'ud'], [2, '+', '3.6 矩阵键盘', 'ud'],
    [2, '+', '3.7 独立数码管(静态数码管)', 'ud'], [2, '+', '3.8 动态数码管', 'ud'], [2, '+', '3.9 LED 16*16点阵', 'ud'], [2, '+', '3.10 采用38译码器驱动8位数码管', 'u'],
    [1, '-', '四、单片机提高篇', 'udc'],
    [2, '+', '4.1 定时器', 'ud'], [2, '+', '4.2 中断', 'ud'], [2, '+', '4.3 串口通信', 'ud'], [2, '-', '4.4  NEC红外线遥控器解码', 'udc'],
    [3, '', '4.4.1 接收头原理图介绍', 'ud', 'selected'], [3, '', '4.4.2 NEC红外线协议介绍', 'ud'], [3, '', '4.4.3 采集NEC协议的信号', 'ud', 'current'], [3, '', '4.4.4 NEC红外线协议解码示例', 'u'],
    [2, '+', '4.5 DS18B20温度传感器', 'ud'], [2, '+', '4.6 EEPROM存储芯片(AT24C02)', 'ud'], [2, '+', '4.7 DS1302 实时时钟芯片', 'ud'],
    [2, '+', '4.8 PCF8591(ADC/DAC)转换芯片', 'ud'], [2, '+', '4.9 (HC-SR04)超声波测距模块', 'ud'], [2, '+', '4.10 使用计数器测量NE555脉冲', 'ud']
  ];
  document.getElementById('tree').innerHTML = rows.map(([level, sign, title, marks, state]) => {
    const w = 57 + level * 27, x = 15.5 + level * 27;
    let d = `M${x} 13H${x + 15}`;
    for (let l = 1; l < level; l++) d += `M${15.5 + l * 27} 0V26`;
    d += `M${x} 0V${marks.includes('d') ? 26 : 13}`;
    if (marks.includes('c')) d += `M${x + 27} 24V26`;
    const color = state === 'current' ? '#339999' : '#996699';
    const box = sign ? `<rect x="${x - 6}" y="7" width="12" height="12" fill="#fff" stroke="#888"/><path d="M${x - 3.5} 13h7${sign === '+' ? `M${x} 9.500v7` : ''}" stroke="#000" stroke-width="1.500"/>` : '';
    const mark = `<path d="M${x + 15} 1h18v24l-7-6-7 6V4l-4-2z" fill="${color}"/>`;
    return `<li class="flex h-[26px]"><svg class="shrink-0" style="width:${w}px" height="26" viewBox="0 0 ${w} 26"><path d="${d}" stroke="#777" stroke-dasharray="1 1.5" fill="none"/>${box}${mark}</svg><a href="#" class="${state === 'selected' ? 'bg-[#dedede] px-[2px] leading-[26px] whitespace-pre' : 'px-[2px] leading-[26px] whitespace-pre'}">${title}</a></li>`;
  }).join('');
</script>
</body>
</html>
